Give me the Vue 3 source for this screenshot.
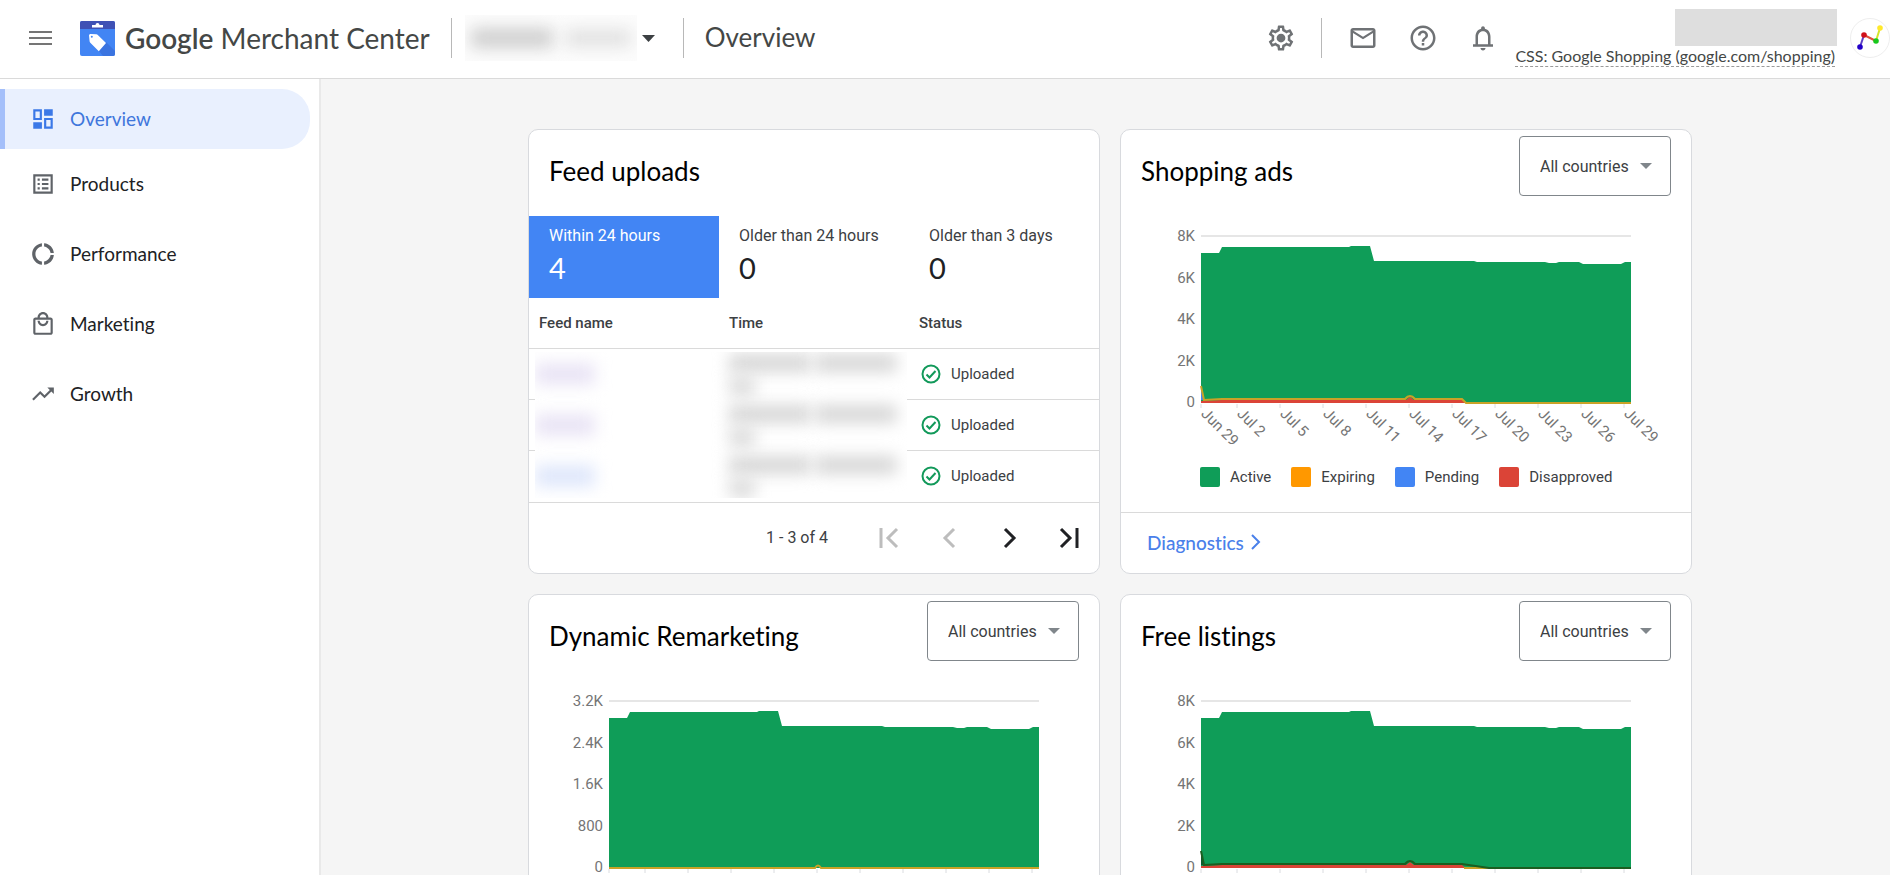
<script setup>
import { ref } from 'vue'

const navItems = [
  { label: 'Overview', active: true, icon: 'M3 3v10h8V3H3zm6 8H5V5h4v6zM3 21h8v-6H3v6zM13 21h8V11h-8v10zm2-8h4v6h-4v-6zM13 3v6h8V3h-8z' },
  { label: 'Products', icon: 'M3 3v18h18V3H3zm16 16H5V5h14v14zM11 7h6v2h-6V7zm0 4h6v2h-6v-2zm0 4h6v2h-6v-2zM7 7h2v2H7V7zm0 4h2v2H7v-2zm0 4h2v2H7v-2z' },
  { label: 'Performance', icon: 'M11 5.08V2C6 2.5 2 6.81 2 12s4 9.5 9 10v-3.08C7.61 18.44 5 15.53 5 12s2.61-6.44 6-6.92zM18.97 11H22c-.47-5-4-8.53-9-9v3.08C16 5.51 18.54 8 18.97 11zM13 18.92V22c5-.47 8.53-4 9-9h-3.03c-.43 3-2.97 5.49-5.97 5.92z' },
  { label: 'Marketing', icon: 'M19 6h-2c0-2.76-2.24-5-5-5S7 3.24 7 6H5c-1.1 0-2 .9-2 2v12c0 1.1.9 2 2 2h14c1.1 0 2-.9 2-2V8c0-1.1-.9-2-2-2zm-7-3c1.66 0 3 1.34 3 3H9c0-1.66 1.34-3 3-3zm7 17H5V8h14v12zm-7-6c-2.76 0-5-2.24-5-5h2c0 1.66 1.34 3 3 3s3-1.34 3-3h2c0 2.76-2.24 5-5 5z' },
  { label: 'Growth', icon: 'M16 6l2.29 2.29-4.88 4.88-4-4L2 16.59 3.41 18l6-6 4 4 6.3-6.29L22 12V6z' },
]

const uploadTabs = [
  { label: 'Within 24 hours', count: 4 },
  { label: 'Older than 24 hours', count: 0 },
  { label: 'Older than 3 days', count: 0 },
]
const activeTab = ref(0)
const uploadRows = ['visited', 'visited', 'fresh']

const days = ['Jun 29', 'Jul 2', 'Jul 5', 'Jul 8', 'Jul 11', 'Jul 14', 'Jul 17', 'Jul 20', 'Jul 23', 'Jul 26', 'Jul 29']
const ticks = days.map((label, i) => ({ label, x: i === 0 ? 80 : 73 + i * 43 }))

const activeArea = 'M80 187V37H98L101 31H228L230 30H249L253 45H353L356 46H424L428 47H435L438 46H458L462 48H500L504 46H510V187Z'
const legend = [
  { label: 'Active', kind: 'active' },
  { label: 'Expiring', kind: 'expiring' },
  { label: 'Pending', kind: 'pending' },
  { label: 'Disapproved', kind: 'disapproved' },
]
const issueArea = 'M80 187V185L101 184H285L289 181L293 184H341L345 187Z'
const issueLine = 'M80 170L83 184L101 183H284Q289 177 294 183H341L345 187'

const charts = [
  { title: 'Shopping ads', id: 'shopping', scale: ['8K', '6K', '4K', '2K', '0'], issues: true, line: issueLine + 'H510', tone: 'expiring' },
  { title: 'Dynamic Remarketing', id: 'remarketing', scale: ['3.2K', '2.4K', '1.6K', '800', '0'], issues: false, line: 'M80 187H286Q289 182 292 187H510', tone: 'expiring' },
  { title: 'Free listings', id: 'listings', scale: ['8K', '6K', '4K', '2K', '0'], issues: true, line: issueLine.replace('L345 187', 'L368 187') + 'H510', tone: 'dark' },
]
</script>

<template>
  <div class="app">
    <header class="topbar">
      <button class="icon-btn menu" type="button" aria-label="Main menu">
        <svg viewBox="0 0 24 16" width="24" height="16"><path d="M1 2h23M1 8h23M1 14h23" stroke="#757575" stroke-width="2" /></svg>
      </button>
      <a class="brand" href="#">
        <svg class="logo" viewBox="0 0 35 35" width="35" height="35" aria-hidden="true">
          <rect width="35" height="35" rx="2" fill="#4285f4" />
          <path d="M2 0h31a2 2 0 0 1 2 2v6H0V2a2 2 0 0 1 2-2z" fill="#3f51b5" />
          <path d="M12 4h3.500a2 2 0 0 1 4 0H23v2.500H12z" fill="#fff" />
          <path d="M26 21l9 9v3a2 2 0 0 1-2 2H23l-4-5z" fill="#3b74e0" />
          <path d="M9 14.500c0-1 .7-1.600 1.600-1.600l5.800.4c.6 0 1 .3 1.400.6l8.200 8.100-7.200 8.200-8.500-8.400c-.4-.4-.7-.9-.7-1.500z" fill="#fff" />
          <circle cx="11.800" cy="15.800" r="1" fill="#4285f4" />
        </svg>
        <span class="wordmark"><b>Google</b> Merchant Center</span>
      </a>
      <span class="rule" />
      <button class="account" type="button" aria-label="Choose account">
        <span class="masked-name"><i class="smudge first" /><i class="smudge second" /></span>
        <svg viewBox="0 0 13 7" width="13" height="7"><path d="M0 0h13L6.500 7z" fill="#3c4043" /></svg>
      </button>
      <span class="rule" />
      <h1>Overview</h1>

      <div class="tools">
        <button class="icon-btn" type="button" aria-label="Settings">
          <svg viewBox="0 0 24 24" width="30" height="30">
            <path d="M19.430 12.980c.04-.32.07-.64.07-.98s-.03-.66-.07-.98l2.110-1.650c.19-.15.24-.42.12-.64l-2-3.460c-.09-.16-.26-.25-.44-.25-.06 0-.12.01-.17.03l-2.490 1c-.52-.4-1.080-.73-1.690-.98l-.38-2.650C14.460 2.180 14.250 2 14 2h-4c-.25 0-.46.18-.49.42l-.38 2.650c-.61.25-1.170.59-1.690.98l-2.490-1c-.06-.02-.12-.03-.18-.03-.17 0-.34.09-.43.25l-2 3.460c-.13.22-.07.49.12.64l2.110 1.650c-.04.32-.07.65-.07.98s.03.66.07.98l-2.110 1.650c-.19.15-.24.42-.12.64l2 3.460c.09.16.26.25.44.25.06 0 .12-.01.17-.03l2.490-1c.52.4 1.080.73 1.690.98l.38 2.650c.03.24.24.42.49.42h4c.25 0 .46-.18.49-.42l.38-2.650c.61-.25 1.170-.59 1.690-.98l2.490 1c.06.02.12.03.18.03.17 0 .34-.09.43-.25l2-3.460c.12-.22.07-.49-.12-.64l-2.110-1.650zm-1.980-1.710c.04.31.05.52.05.73 0 .21-.02.43-.05.73l-.14 1.130.89.7 1.080.84-.7 1.210-1.270-.51-1.040-.42-.9.68c-.43.32-.84.56-1.250.73l-1.060.43-.16 1.130-.2 1.350h-1.400l-.19-1.350-.16-1.130-1.060-.43c-.43-.18-.83-.41-1.230-.71l-.91-.7-1.060.43-1.270.51-.7-1.210 1.080-.84.89-.7-.14-1.130c-.03-.31-.05-.54-.05-.74s.02-.43.05-.73l.14-1.130-.89-.7-1.080-.84.7-1.210 1.270.51 1.040.42.9-.68c.43-.32.84-.56 1.250-.73l1.060-.43.16-1.130.2-1.350h1.390l.19 1.350.16 1.130 1.060.43c.43.18.83.41 1.230.71l.91.7 1.060-.43 1.270-.51.7 1.210-1.070.85-.89.7.14 1.130z" />
            <circle cx="12" cy="12" r="3.500" />
          </svg>
        </button>
        <span class="rule" />
        <button class="icon-btn" type="button" aria-label="Messages">
          <svg viewBox="0 0 24 24" width="30" height="30"><path d="M20 4H4c-1.100 0-2 .9-2 2v12c0 1.100.9 2 2 2h16c1.100 0 2-.9 2-2V6c0-1.100-.9-2-2-2zm0 14H4V8l8 5 8-5v10zm-8-7L4 6h16l-8 5z" /></svg>
        </button>
        <button class="icon-btn" type="button" aria-label="Help">
          <svg viewBox="0 0 24 24" width="30" height="30"><path d="M11 18h2v-2h-2v2zm1-16C6.480 2 2 6.480 2 12s4.480 10 10 10 10-4.480 10-10S17.520 2 12 2zm0 18c-4.410 0-8-3.590-8-8s3.590-8 8-8 8 3.590 8 8-3.590 8-8 8zm0-14c-2.210 0-4 1.790-4 4h2c0-1.100.9-2 2-2s2 .9 2 2c0 2-3 1.750-3 5h2c0-2.250 3-2.500 3-5 0-2.210-1.790-4-4-4z" /></svg>
        </button>
        <button class="icon-btn" type="button" aria-label="Notifications">
          <svg viewBox="0 0 24 24" width="30" height="30"><path d="M12 22c1.100 0 2-.9 2-2h-4c0 1.100.9 2 2 2zm6-5v-6c0-3.070-1.630-5.640-4.500-6.320V4c0-.83-.67-1.500-1.500-1.500s-1.500.67-1.500 1.500v.68C7.640 5.360 6 7.920 6 11v6H4v2h16v-2h-2zm-2 0H8v-6c0-2.480 1.510-4.500 4-4.500s4 2.020 4 4.500v6z" /></svg>
        </button>
      </div>

      <div class="profile">
        <span class="masked-user" />
        <a class="css-link" href="#">CSS: Google Shopping (google.com/shopping)</a>
      </div>
      <button class="avatar" type="button" aria-label="Account">
        <svg viewBox="0 0 38 38" width="38" height="38">
          <g fill="none" stroke-width="2">
            <path d="M9 28l4-12" stroke="#5b3fc4" /><path d="M13 16l12 6" stroke="#e0503a" /><path d="M25 22l4-13" stroke="#d5e52a" />
          </g>
          <circle cx="9" cy="28" r="2.800" fill="#2200c8" /><circle cx="13" cy="16" r="2.800" fill="#d0101a" />
          <circle cx="25" cy="22" r="2.800" fill="#18c81c" /><circle cx="29" cy="9" r="2.800" fill="#ffe92b" />
        </svg>
      </button>
    </header>

    <div class="body">
      <nav class="sidebar" aria-label="Main">
        <a v-for="item in navItems" :key="item.label" href="#" class="nav-item" :class="{ active: item.active }">
          <svg viewBox="0 0 24 24" width="26" height="26" aria-hidden="true"><path :d="item.icon" fill-rule="evenodd" /></svg>
          <span>{{ item.label }}</span>
        </a>
      </nav>

      <main class="content">
        <div class="grid">
          <section class="card feeds">
            <div class="card-head"><h2>Feed uploads</h2></div>
            <div class="tabs">
              <button v-for="(tab, i) in uploadTabs" :key="tab.label" type="button" class="tab" :class="{ active: activeTab === i }" @click="activeTab = i">
                <span class="tab-label">{{ tab.label }}</span>
                <span class="tab-count">{{ tab.count }}</span>
              </button>
            </div>
            <div class="table-wrap">
              <table>
                <thead><tr><th scope="col">Feed name</th><th scope="col">Time</th><th scope="col">Status</th></tr></thead>
                <tbody>
                  <tr v-for="(row, i) in uploadRows" :key="i">
                    <td></td><td></td>
                    <td>
                      <span class="status">
                        <svg viewBox="0 0 20 20" width="20" height="20" aria-hidden="true"><g fill="none" stroke="#12995a" stroke-width="2"><circle cx="10" cy="10" r="8.500" /><path d="M5.500 10.500l3 3 6-6.500" /></g></svg>
                        Uploaded
                      </span>
                    </td>
                  </tr>
                </tbody>
              </table>
              <div class="masked-cells" aria-hidden="true">
                <div v-for="(row, i) in uploadRows" :key="i" class="masked-row">
                  <span class="name-cell"><i class="smudge name" :class="row" /></span>
                  <span class="time-cell">
                    <i class="smudge date" /><i class="smudge clock" /><i class="smudge zone" />
                  </span>
                </div>
              </div>
            </div>
            <div class="pager">
              <span class="range">1 - 3 of 4</span>
              <button type="button" aria-label="First page" disabled><svg viewBox="0 0 24 24" width="24" height="24"><path d="M4 2v20M20 3l-9 9 9 9" /></svg></button>
              <button type="button" aria-label="Previous page" disabled><svg viewBox="0 0 24 24" width="24" height="24"><path d="M17 3l-9 9 9 9" /></svg></button>
              <button type="button" aria-label="Next page"><svg viewBox="0 0 24 24" width="24" height="24"><path d="M8 3l9 9-9 9" /></svg></button>
              <button type="button" aria-label="Last page"><svg viewBox="0 0 24 24" width="24" height="24"><path d="M4 3l9 9-9 9M20 2v20" /></svg></button>
            </div>
          </section>

          <section v-for="chart in charts" :key="chart.id" class="card">
            <div class="card-head">
              <h2>{{ chart.title }}</h2>
              <div class="picker">
                <select :aria-label="chart.title + ' country'"><option>All countries</option></select>
                <svg viewBox="0 0 12 6" width="12" height="6" aria-hidden="true"><path d="M0 0h12L6 6z" fill="#80868b" /></svg>
              </div>
            </div>
            <svg class="chart" viewBox="0 0 570 230" role="img" :aria-label="chart.title + ' items over time'">
              <path d="M80 20H510" stroke="#e6e6e6" stroke-width="2" />
              <text v-for="(label, i) in chart.scale" :key="label" class="axis" text-anchor="end" x="74" :y="25 + i * 41.5">{{ label }}</text>
              <path :d="activeArea" fill="#0f9d58" />
              <template v-if="chart.issues">
                <path d="M80 172L83 184H80Z" :fill="chart.tone === 'dark' ? '#0b5a30' : '#4285f4'" />
                <path :d="issueArea" fill="#db4437" />
              </template>
              <path v-if="chart.tone === 'dark'" d="M343 187H368" stroke="#c9a227" stroke-width="2" />
              <path :d="chart.line" class="issue-line" :class="chart.tone" />
              <g v-for="tick in ticks" :key="tick.label" :transform="`translate(${tick.x} 188)`">
                <path d="M0 0V4" stroke="#dadce0" stroke-width="1" />
                <text class="axis" transform="rotate(45)" x="7" y="8">{{ tick.label }}</text>
              </g>
            </svg>
            <ul class="legend">
              <li v-for="entry in legend" :key="entry.kind"><i :class="entry.kind" />{{ entry.label }}</li>
            </ul>
            <div class="card-foot">
              <a href="#">Diagnostics<svg viewBox="0 0 10 16" width="10" height="16" aria-hidden="true"><path d="M1 1l7 7-7 7" fill="none" stroke="#4a80ea" stroke-width="2" /></svg></a>
            </div>
          </section>
        </div>
      </main>
    </div>
  </div>
</template>

<style>
body { margin: 0; }
</style>

<style scoped>
* { box-sizing: border-box; }
button, select { font: inherit; color: inherit; background: none; border: 0; padding: 0; margin: 0; cursor: pointer; }
a { color: inherit; text-decoration: none; }
h1, h2 { margin: 0; font-weight: 400; }

.app { height: 100vh; display: flex; flex-direction: column; overflow: hidden; font-family: Roboto, "Liberation Sans", sans-serif; font-variant-ligatures: none; font-size: 16px; color: #202124; background: #f5f5f5; }

.topbar { flex: none; height: 79px; display: flex; align-items: center; background: #fff; border-bottom: 1px solid #dadada; padding-bottom: 2px; font-family: Lato, "Open Sans", sans-serif; color: #444746; }
.icon-btn { width: 60px; height: 40px; display: grid; place-items: center; fill: #6f7275; }
.menu { width: 24px; margin-left: 28px; }
.brand { display: flex; align-items: center; gap: 10px; margin-left: 28px; }
.logo { display: block; }
.wordmark { font-size: 28px; line-height: 36px; white-space: nowrap; }
.wordmark b { font-weight: 600; }
.rule { width: 1px; height: 40px; background: #b8b8b8; }
.brand + .rule { margin-left: 21px; }
.account { display: flex; align-items: center; gap: 5px; margin: 0 28px 0 13px; }
.masked-name { width: 172px; height: 46px; display: flex; align-items: center; gap: 12px; padding: 0 6px; overflow: hidden; background: #fcfcfc; }
.smudge { display: block; filter: blur(8px); border-radius: 4px; }
.first { width: 84px; height: 20px; background: #cfcfcf; }
.second { width: 68px; height: 18px; background: #e2e2e2; }
h1 { margin-left: 21px; padding-bottom: 2px; font-size: 26px; line-height: 36px; }
.tools { display: flex; align-items: center; margin-left: auto; }
.tools .rule { margin: 0 11px 0 10px; }
.profile { display: flex; flex-direction: column; align-items: flex-end; margin-left: 2px; }
.masked-user { width: 162px; height: 37px; background: #dedede; }
.css-link { font-size: 16px; line-height: 20px; border-bottom: 1px dashed #9a9a9a; margin-right: 2px; }
.avatar { width: 40px; height: 40px; margin-left: 13px; border: 1px solid #eee; border-radius: 50%; display: grid; place-items: center; }

.body { flex: 1; min-height: 0; display: flex; }
.sidebar { flex: none; width: 321px; padding-top: 10px; background: #fff; border-right: 2px solid #e9e9e9; font-family: Lato, "Open Sans", sans-serif; font-size: 19px; }
.nav-item { height: 70px; display: flex; align-items: center; gap: 14px; padding-left: 30px; fill: #5f6368; }
.nav-item span { padding-bottom: 2px; }
.nav-item.active { height: 60px; margin-right: 9px; padding-left: 25px; border-left: 5px solid #a4bffa; border-radius: 0 28px 28px 0; background: #e9f0fe; color: #3f76dc; fill: #3b78e7; }
.content { flex: 1; min-width: 0; overflow-y: auto; scrollbar-width: none; padding: 50px 20px 50px 29px; }
.grid { max-width: 1164px; margin: 0 auto; display: grid; grid-template-columns: 1fr 1fr; gap: 20px; }

.card { display: flex; flex-direction: column; background: #fff; border: 1px solid #d8dade; border-radius: 10px; overflow: hidden; }
.card-head { height: 86px; display: flex; align-items: flex-start; justify-content: space-between; padding: 6px 20px 0; }
h2 { padding-top: 18px; font-family: Lato, "Open Sans", sans-serif; font-size: 26px; line-height: 34px; color: #000; }
.picker { width: 152px; height: 60px; display: grid; align-items: center; }
.picker > * { grid-area: 1 / 1; }
.picker select { appearance: none; width: 100%; height: 60px; padding-left: 20px; border: 1px solid #80868b; border-radius: 4px; font-size: 16px; color: #3c4043; }
.picker svg { justify-self: end; margin-right: 19px; pointer-events: none; }

.tabs { display: grid; grid-template-columns: repeat(3, 1fr); }
.tab { height: 82px; padding: 10px 20px 0; display: flex; flex-direction: column; align-items: flex-start; text-align: left; color: #3c4043; }
.tab-label { font-size: 16px; line-height: 20px; }
.tab-count { font-family: Lato, "Open Sans", sans-serif; font-size: 29px; line-height: 44px; color: #202124; }
.tab.active { background: #4285f4; color: #fff; }
.tab.active .tab-count { color: #fff; }
.table-wrap { position: relative; }
table { width: 100%; table-layout: fixed; border-collapse: collapse; font-size: 15px; color: #3c4043; }
th, td { height: 51px; padding: 0 10px; text-align: left; border-bottom: 1px solid #dadada; }
th { height: 50px; font-weight: 500; }
tr:last-child td { height: 52px; }
.status { display: flex; align-items: center; gap: 10px; padding-left: 2px; }
.masked-cells { position: absolute; left: 6px; right: 192px; top: 54px; bottom: 5px; overflow: hidden; background: #fff; display: grid; grid-template-rows: repeat(3, 51px); }
.masked-row { display: grid; grid-template-columns: 190px 1fr; }
.name-cell { display: flex; align-items: center; padding-bottom: 8px; }
.name { width: 60px; height: 22px; }
.visited { background: #e9e4f5; }
.fresh { background: #dfe7fb; }
.time-cell { display: grid; grid-template-columns: 82px 82px; grid-template-rows: 20px 20px; column-gap: 4px; row-gap: 2px; padding: 2px 0 0 4px; }
.date, .clock { background: #d6d6d6; height: 18px; }
.zone { background: #dcdcdc; width: 26px; height: 20px; }
.pager { flex: 1; min-height: 70px; display: flex; align-items: center; justify-content: flex-end; padding-right: 18px; color: #3c4043; }
.range { margin-right: 49px; }
.pager button { width: 24px; height: 24px; margin-left: 36px; }
.range + button { margin-left: 0; }
.pager svg { display: block; fill: none; stroke: #202124; stroke-width: 3; }
.pager button:disabled svg { stroke: #bdbdbd; }

.chart { display: block; width: 100%; overflow: visible; }
.axis { font-size: 15px; fill: #757575; }
.issue-line { fill: none; stroke-width: 2; }
.issue-line.expiring { stroke: #c9a227; }
.issue-line.dark { stroke: #1b5e20; }
.legend { list-style: none; display: flex; gap: 20px; margin: 0; padding: 21px 0 0 79px; font-size: 15px; line-height: 20px; color: #3c4043; }
.legend li { display: flex; gap: 10px; }
.legend i { width: 20px; height: 20px; border-radius: 2px; }
.legend .active { background: #0f9d58; }
.legend .expiring { background: #ff9800; }
.legend .pending { background: #4285f4; }
.legend .disapproved { background: #db4437; }
.card-foot { margin-top: 25px; border-top: 1px solid #dadada; height: 61px; display: flex; align-items: center; padding: 0 0 2px 26px; font-family: Lato, "Open Sans", sans-serif; font-size: 19px; font-weight: 500; color: #4a80ea; }
.card-foot a { display: flex; align-items: center; gap: 7px; }
</style>
